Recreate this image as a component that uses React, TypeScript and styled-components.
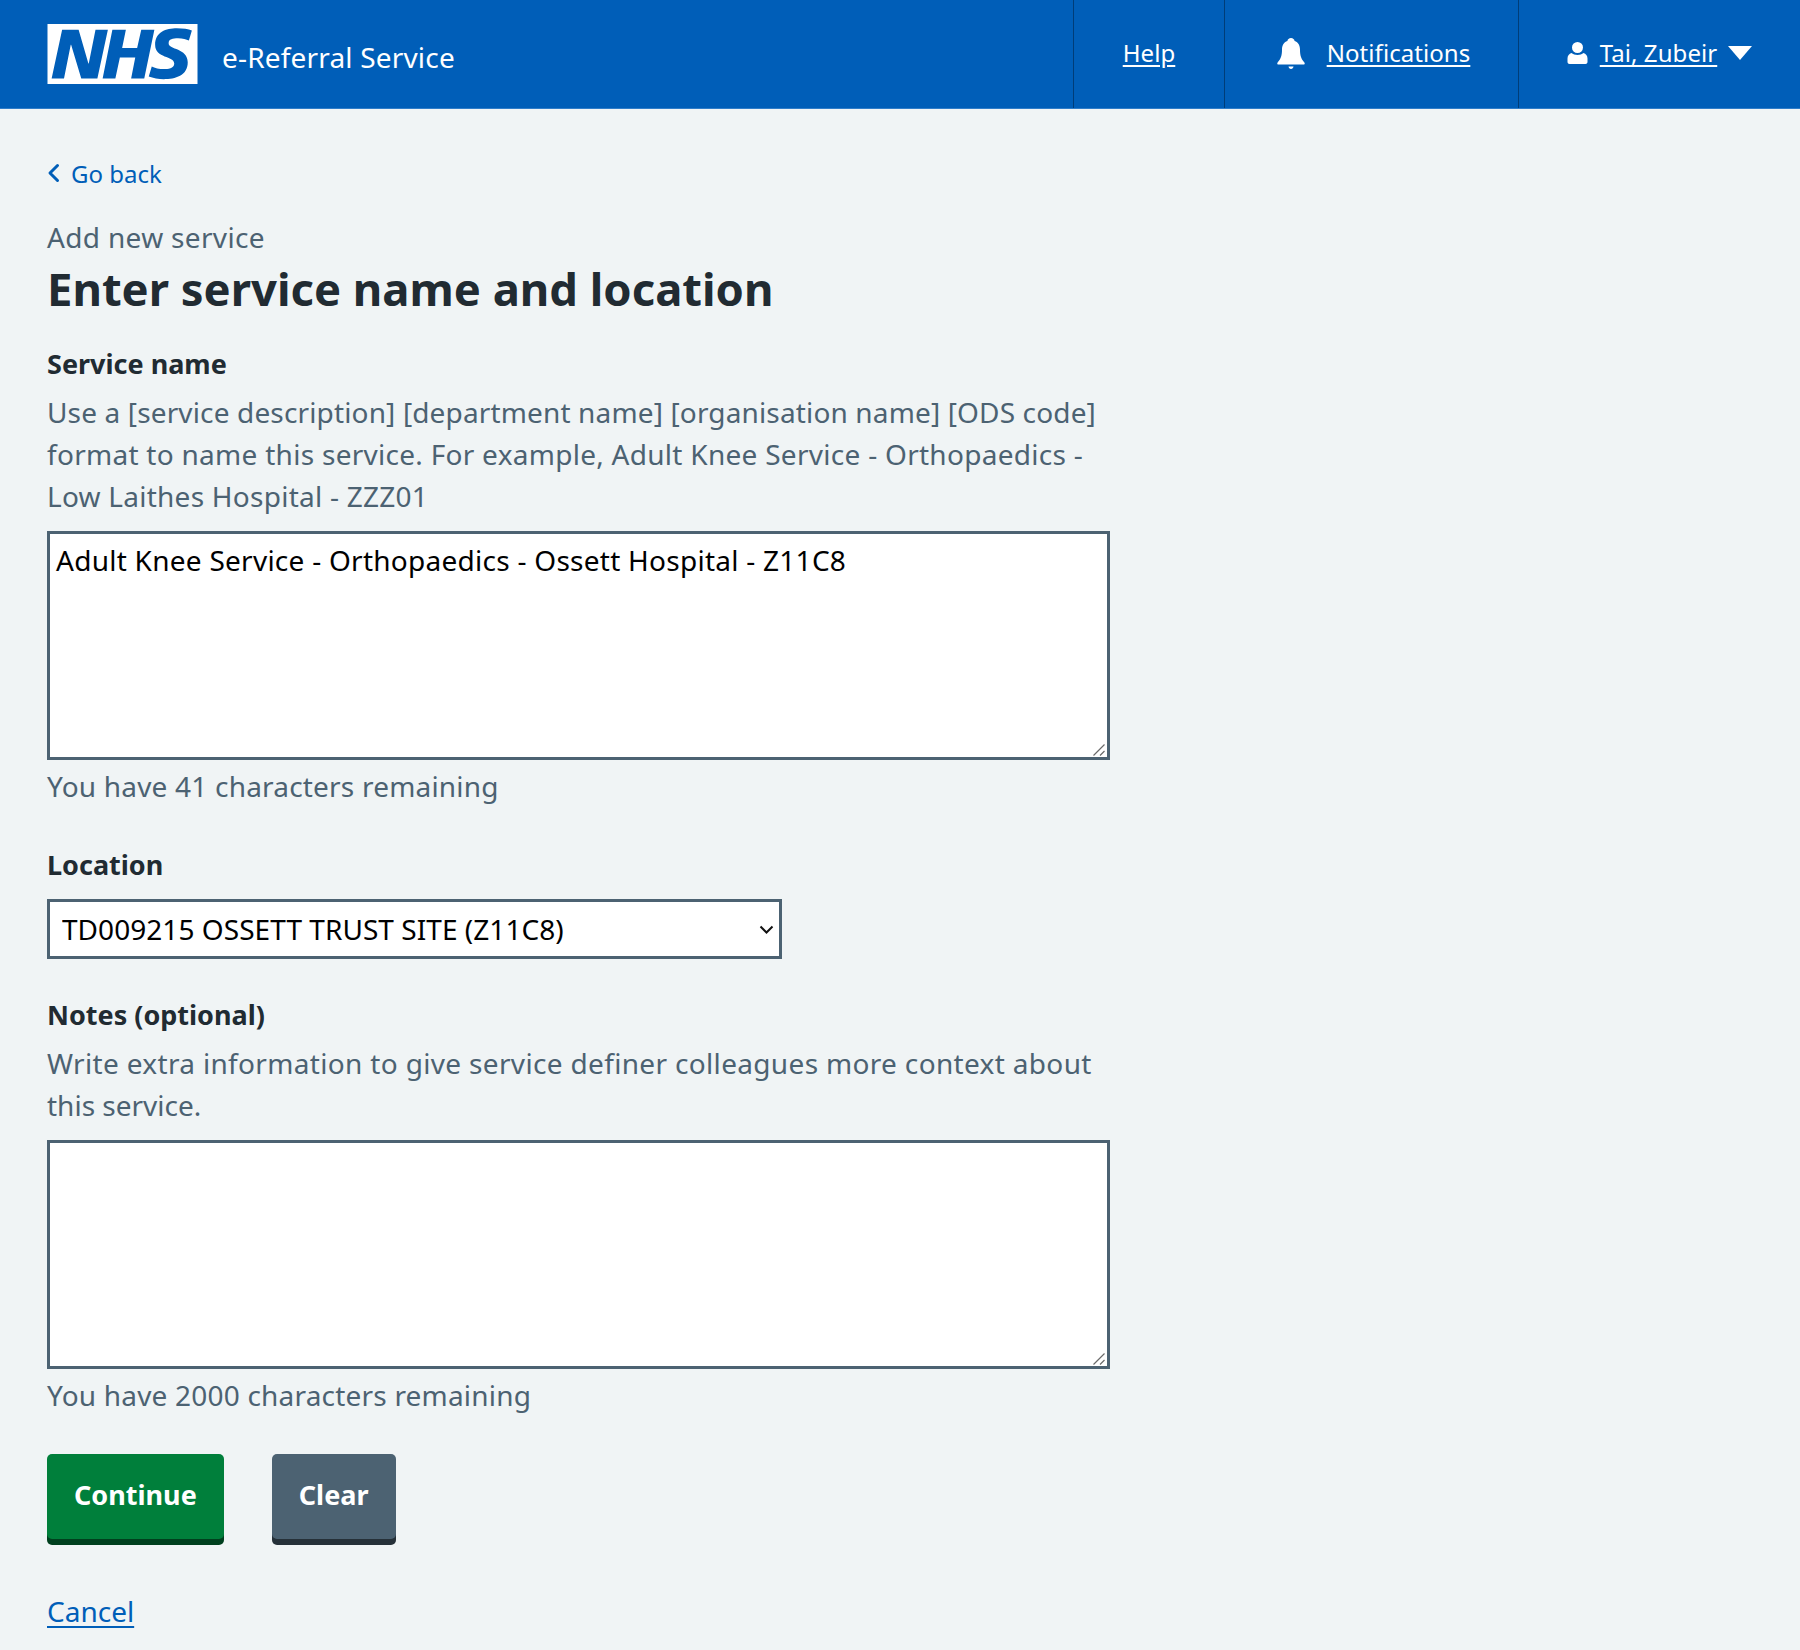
import React from "react";
import styled, { createGlobalStyle } from "styled-components";

const GlobalStyle = createGlobalStyle`
  html, body { margin: 0; padding: 0; background: #f0f4f5; }
  body { font-family: "Noto Sans", "Open Sans", Arial, sans-serif; color: #212b32; }
  * { box-sizing: border-box; }
`;

const Page = styled.div`
  width: 1800px;
  height: 1650px;
  overflow: hidden;
  background: #f0f4f5;
`;

const Header = styled.header`
  display: flex;
  align-items: stretch;
  height: 109px;
  background: #005eb8;
  border-bottom: 1px solid #2f7dc9;
  color: #fff;
`;

const Brand = styled.div`
  display: flex;
  align-items: flex-start;
  flex: 1;
  gap: 24px;
  padding: 24px 0 0 47px;
`;

const Logo = styled.svg`
  display: block;
  width: 151px;
  height: 60px;
`;

const ServiceName = styled.span`
  font-size: 28px;
  line-height: 34px;
  margin-top: 16px;
  letter-spacing: 0.18px;
`;

const NavItem = styled.div<{ $width: number; $inset?: number }>`
  display: flex;
  align-items: center;
  justify-content: center;
  width: ${(p) => p.$width}px;
  border-left: 1px solid #003d78;
  padding-bottom: 2px;
  padding-left: ${(p) => p.$inset ?? 0}px;
`;

const NavLink = styled.a`
  color: #fff;
  font-size: 24px;
  line-height: 32px;
  text-decoration: underline;
  text-underline-offset: 3px;
  text-decoration-thickness: 2px;
  letter-spacing: 0.07px;
`;

const Main = styled.main`
  padding: 0 47px;
`;

const BackLink = styled.a`
  display: flex;
  align-items: center;
  gap: 11px;
  margin-top: 47px;
  height: 34px;
  color: #005eb8;
  font-size: 24px;
  text-decoration: none;
`;

const Caption = styled.div`
  margin-top: 29px;
  font-size: 28px;
  line-height: 36px;
  color: #4c6272;
  letter-spacing: 0.33px;
`;

const Title = styled.h1`
  margin: 5px 0 0;
  font-size: 45.4px;
  line-height: 56px;
  font-weight: 700;
  color: #212b32;
`;

const Form = styled.form`
  display: flex;
  flex-direction: column;
  width: 1063px;
`;

const Field = styled.div<{ $top: number }>`
  margin-top: ${(p) => p.$top}px;
`;

const Label = styled.label`
  display: block;
  font-size: 27px;
  line-height: 40px;
  font-weight: 700;
  color: #212b32;
`;

const Hint = styled.div`
  margin-top: 7px;
  font-size: 28px;
  line-height: 42px;
  color: #4c6272;
`;

const HintLine = styled.span<{ $spacing: number }>`
  display: block;
  letter-spacing: ${(p) => p.$spacing}px;
`;

const TextWrap = styled.div`
  position: relative;
  margin-top: 14px;
`;

const TextBox = styled.textarea`
  display: block;
  width: 1063px;
  height: 229px;
  padding: 5px 6px;
  border: 3px solid #4c6272;
  border-radius: 0;
  background: #fff;
  color: #000;
  font-family: inherit;
  font-size: 28px;
  line-height: 42px;
  letter-spacing: 0.26px;
  outline: none;
  resize: none;
`;

const Grip = styled.svg`
  position: absolute;
  right: 5px;
  bottom: 4px;
  width: 12px;
  height: 12px;
  pointer-events: none;
`;

const Count = styled.div`
  margin-top: 5px;
  font-size: 28px;
  line-height: 42px;
  letter-spacing: 0.2px;
  color: #4c6272;
`;

const SelectWrap = styled.div`
  position: relative;
  width: 735px;
  margin-top: 14px;
`;

const Select = styled.select`
  display: block;
  width: 100%;
  height: 60px;
  padding: 0 12px;
  border: 3px solid #4c6272;
  border-radius: 0;
  background: #fff;
  color: #000;
  font-family: inherit;
  font-size: 28px;
  letter-spacing: 0.05px;
  outline: none;
  appearance: none;
`;

const SelectChevron = styled.svg`
  position: absolute;
  right: 8px;
  top: 26px;
  width: 15px;
  height: 9px;
  pointer-events: none;
`;

const Actions = styled.div`
  display: flex;
  gap: 48px;
  margin-top: 38px;
`;

const Button = styled.button<{ $bg: string; $shadow: string }>`
  height: 85px;
  margin-bottom: 6px;
  padding: 0 27px 4px;
  border: 0;
  border-radius: 5px;
  background: ${(p) => p.$bg};
  box-shadow: 0 6px 0 ${(p) => p.$shadow};
  color: #fff;
  font-family: inherit;
  font-size: 27px;
  font-weight: 700;
`;

const CancelLink = styled.a`
  display: block;
  width: fit-content;
  margin-top: 45px;
  color: #005eb8;
  font-size: 28px;
  line-height: 42px;
  text-decoration: underline;
  text-underline-offset: 4px;
  text-decoration-thickness: 2px;
`;

const Bell = styled.svg`
  display: block;
  width: 30px;
  height: 34px;
  margin: 2px 21px 0 0;
`;

const UserIcon = styled.svg`
  display: block;
  width: 21px;
  height: 22px;
  margin-right: 12px;
`;

const Caret = styled.svg`
  display: block;
  width: 24px;
  height: 14px;
  margin-left: 11px;
`;

const ResizeGrip = () => (
  <Grip viewBox="0 0 12 12">
    <path d="M0.5 11.500 11.500 0.500M7 11.500l4.500-4.500" fill="none" stroke="#6b6b6b" strokeWidth="1.200" />
  </Grip>
);

export default function App() {
  return (
    <Page>
      <GlobalStyle />
      <Header>
        <Brand>
          <Logo viewBox="0 0 40 16" aria-label="NHS">
            <path fill="#fff" d="M0 0h40v16H0z" />
            <path
              fill="#005eb8"
              d="M3.9 1.5h4.4l2.6 9h.1l1.8-9h3.3l-2.8 13H9l-2.7-9h-.1l-1.8 9H1.1M17.3 1.5h3.6l-1 4.9h4L25 1.5h3.5l-2.7 13h-3.5l1.1-5.6h-4.1l-1.2 5.6h-3.4M37.7 4.4c-.7-.3-1.6-.6-2.9-.6-1.4 0-2.5.2-2.5 1.3 0 1.8 5.1 1.2 5.1 5.1 0 3.6-3.3 4.5-6.4 4.5-1.3 0-2.9-.3-4-.7l.8-2.7c.7.4 2.1.7 3.2.7s2.8-.2 2.8-1.5c0-2.1-5.1-1.3-5.1-5 0-3.4 2.9-4.4 5.8-4.4 1.6 0 3.1.2 4 .6"
            />
          </Logo>
          <ServiceName>e-Referral Service</ServiceName>
        </Brand>
        <NavItem $width={151}>
          <NavLink href="#">Help</NavLink>
        </NavItem>
        <NavItem $width={294} $inset={3}>
          <Bell viewBox="0 0 30 34">
            <path
              fill="#fff"
              d="M15 1c-2 0-3.4 1.4-3.6 3C7.6 5.2 6 8.600 6 12.400c0 6-1 9.200-4.400 13-.8.900-.2 2.100 1 2.100h24.800c1.200 0 1.800-1.200 1-2.100C25 21.600 24 18.400 24 12.400c0-3.800-1.600-7.200-5.400-8.400C18.400 2.400 17 1 15 1z"
            />
            <path fill="#fff" d="M12.500 29.500h5c-.2 1.600-1.200 2.500-2.500 2.500s-2.300-.9-2.500-2.500z" />
          </Bell>
          <NavLink href="#">Notifications</NavLink>
        </NavItem>
        <NavItem $width={282}>
          <UserIcon viewBox="0 0 21 22">
            <ellipse fill="#fff" cx="10.500" cy="5.500" rx="5.500" ry="5.500" />
            <path
              fill="#fff"
              d="M4.500 11c1.400 1.300 3.700 2 6 2s4.600-.7 6-2c2.300.7 4 2.700 4 5.500V20c0 1.100-.9 2-2 2h-16c-1.100 0-2-.9-2-2v-3.500C.5 13.700 2.200 11.700 4.500 11z"
            />
          </UserIcon>
          <NavLink href="#">Tai, Zubeir</NavLink>
          <Caret viewBox="0 0 24 14">
            <path fill="#fff" d="M0 0h24L12 14z" />
          </Caret>
        </NavItem>
      </Header>
      <Main>
        <BackLink href="#">
          <svg width="13" height="20" viewBox="0 0 13 20">
            <path d="M10.500 2.500 3 10l7.500 7.500" fill="none" stroke="#005eb8" strokeWidth="3" strokeLinecap="round" strokeLinejoin="round" />
          </svg>
          Go back
        </BackLink>
        <Caption>Add new service</Caption>
        <Title>Enter service name and location</Title>
        <Form>
          <Field $top={28}>
            <Label htmlFor="service">Service name</Label>
            <Hint>
              <HintLine $spacing={0.145}>Use a [service description] [department name] [organisation name] [ODS code]</HintLine>
              <HintLine $spacing={0.28}>format to name this service. For example, Adult Knee Service - Orthopaedics -</HintLine>
              <HintLine $spacing={0.25}>Low Laithes Hospital - ZZZ01</HintLine>
            </Hint>
            <TextWrap>
              <TextBox id="service" defaultValue="Adult Knee Service - Orthopaedics - Ossett Hospital - Z11C8" />
              <ResizeGrip />
            </TextWrap>
            <Count>You have 41 characters remaining</Count>
          </Field>
          <Field $top={38}>
            <Label htmlFor="location">Location</Label>
            <SelectWrap>
              <Select id="location" defaultValue="TD009215">
                <option value="TD009215">TD009215 OSSETT TRUST SITE (Z11C8)</option>
              </Select>
              <SelectChevron viewBox="0 0 15 9">
                <path d="M1.500 1.500 7.500 7.500l6-6" fill="none" stroke="#111" strokeWidth="2" />
              </SelectChevron>
            </SelectWrap>
          </Field>
          <Field $top={36}>
            <Label htmlFor="notes">Notes (optional)</Label>
            <Hint>
              <HintLine $spacing={0.335}>Write extra information to give service definer colleagues more context about</HintLine>
              <HintLine $spacing={0}>this service.</HintLine>
            </Hint>
            <TextWrap>
              <TextBox id="notes" />
              <ResizeGrip />
            </TextWrap>
            <Count>You have 2000 characters remaining</Count>
          </Field>
          <Actions>
            <Button type="button" $bg="#007f3b" $shadow="#00401e">Continue</Button>
            <Button type="button" $bg="#4c6272" $shadow="#263139">Clear</Button>
          </Actions>
          <CancelLink href="#">Cancel</CancelLink>
        </Form>
      </Main>
    </Page>
  );
}
